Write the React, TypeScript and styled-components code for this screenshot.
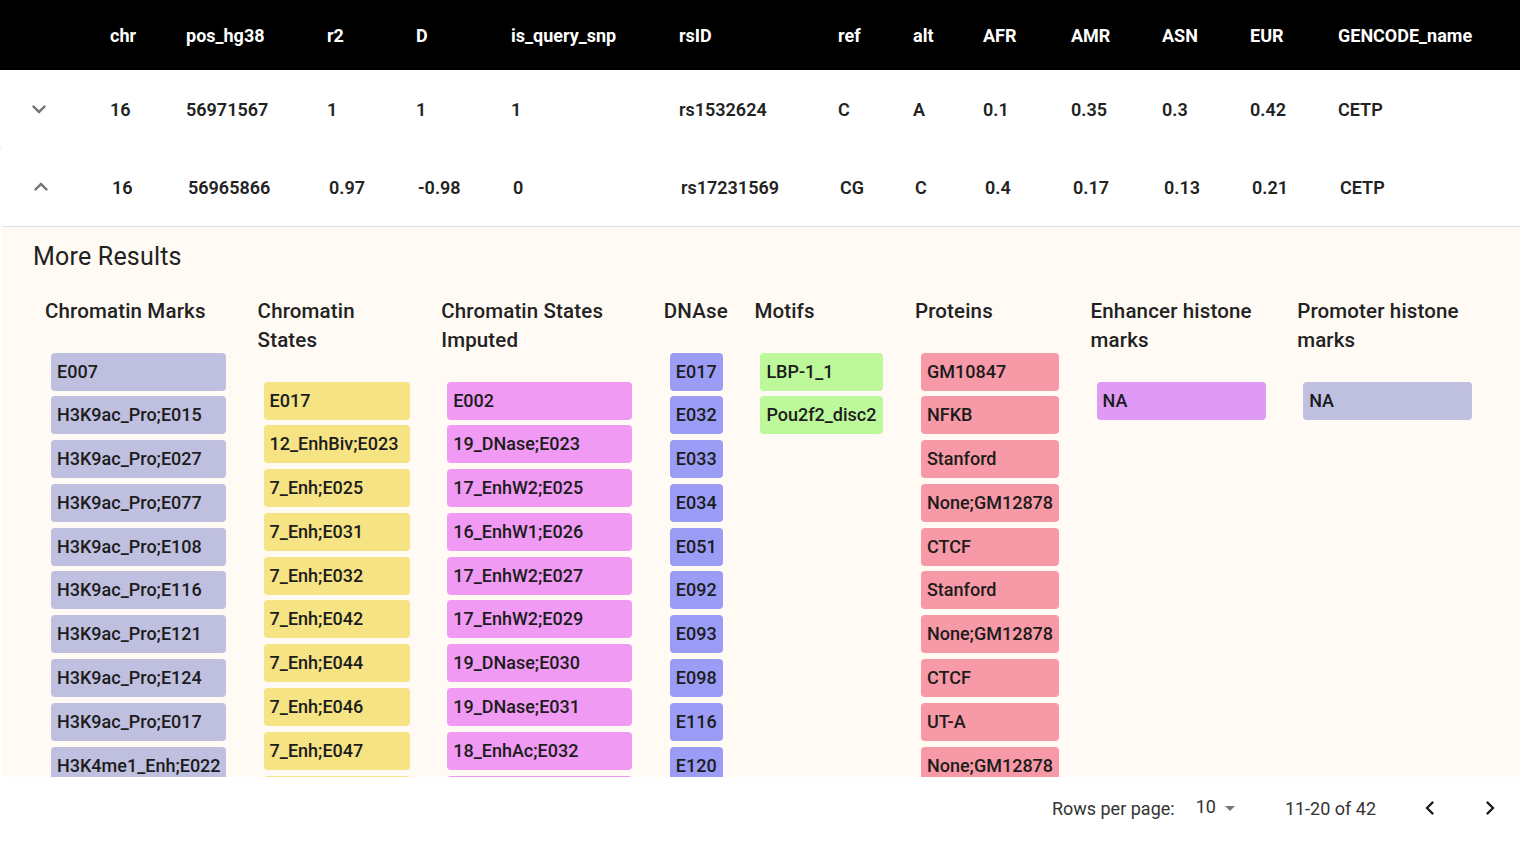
import React from 'react';
import styled, { createGlobalStyle } from 'styled-components';

const GlobalStyle = createGlobalStyle`
  html, body {
    margin: 0;
    padding: 0;
    background: #fff;
    font-family: Roboto, "Liberation Sans", Arial, sans-serif;
  }
`;

const gridCols = '110px 76px 141px 89px 95px 168px 159px 75px 70px 88px 91px 88px 88px 1fr';

const Page = styled.div`
  width: 1520px;
  height: 853px;
  display: flex;
  flex-direction: column;
  overflow: hidden;
`;

const Scroller = styled.div`
  height: 777px;
  overflow: hidden;
  flex-shrink: 0;
`;

const HeadRow = styled.div`
  display: grid;
  grid-template-columns: ${gridCols};
  align-items: center;
  height: 70px;
  background: #000;
  color: #fff;
  font-size: 18px;
  font-weight: 700;
`;

const Row = styled.div<{ $shadow?: boolean }>`
  display: grid;
  grid-template-columns: ${gridCols};
  align-items: center;
  height: 78px;
  background: #fff;
  color: #222;
  font-size: 18px;
  font-weight: 600;
  position: relative;
  z-index: 1;
  box-shadow: ${(p) => (p.$shadow ? '0 1px 3px rgba(0, 0, 0, 0.12)' : 'none')};
`;

const ExpandCell = styled.div`
  display: flex;
  align-items: center;
  padding-left: 25px;
`;

const Group = styled.div`
  margin-left: 2px;
`;

const Details = styled.div`
  background: #fffaf3;
  border-top: 1px solid #e0e0e0;
  padding: 14px 0 40px 31px;
  min-height: 700px;
`;

const Title = styled.div`
  font-size: 25px;
  line-height: 32px;
  font-weight: 400;
  letter-spacing: 0.2px;
  color: #222;
`;

const Columns = styled.div`
  display: flex;
  align-items: flex-start;
  gap: 25.6px;
  margin-top: 24px;
  padding-left: 12px;
`;

const Column = styled.div<{ $w: number }>`
  width: ${(p) => p.$w}px;
  display: flex;
  flex-direction: column;
`;

const ColTitle = styled.div`
  font-size: 20.5px;
  line-height: 29px;
  font-weight: 500;
  letter-spacing: 0.15px;
  color: #222;
  margin-bottom: 26.5px;
`;

const ChipList = styled.div`
  display: flex;
  flex-direction: column;
  gap: 5.8px;
  padding: 0 6px;
`;

const Chip = styled.div<{ $bg: string }>`
  height: 38px;
  line-height: 38px;
  padding: 0 6px;
  border-radius: 4px;
  background: ${(p) => p.$bg};
  color: #1c1c1c;
  font-size: 18px;
  font-weight: 500;
  white-space: nowrap;
`;

const Footer = styled.div`
  height: 76px;
  box-sizing: border-box;
  display: flex;
  align-items: center;
  justify-content: flex-end;
  padding: 0 10px 14px 0;
  color: #333;
  font-size: 18px;
`;

const SelectBox = styled.div`
  display: flex;
  align-items: center;
  margin-left: 21px;
  padding-bottom: 4px;
  svg {
    margin-left: 2px;
    margin-top: 4px;
  }
`;

const PageInfo = styled.div`
  margin-left: 43px;
`;

const PageButton = styled.div<{ $first?: boolean }>`
  width: 40px;
  height: 40px;
  display: flex;
  align-items: center;
  justify-content: center;
  margin-left: ${(p) => (p.$first ? '34px' : '20px')};
`;

const Icon = ({ d, size, color }: { d: string; size: number; color: string }) => (
  <svg width={size} height={size} viewBox="0 0 24 24" fill={color}>
    <path d={d} />
  </svg>
);

const ICON_DOWN = 'M7.41 8.59 12 13.17l4.59-4.58L18 10l-6 6-6-6 1.41-1.41z';
const ICON_UP = 'M7.41 15.41 12 10.83l4.59 4.58L18 14l-6-6-6 6z';
const ICON_LEFT = 'M15.41 16.59 10.83 12l4.58-4.59L14 6l-6 6 6 6 1.41-1.41z';
const ICON_RIGHT = 'M8.59 16.59 13.17 12 8.59 7.41 10 6l6 6-6 6-1.41-1.41z';
const ICON_DROP = 'M7 10l5 5 5-5z';

const headers = ['chr', 'pos_hg38', 'r2', 'D', 'is_query_snp', 'rsID', 'ref', 'alt', 'AFR', 'AMR', 'ASN', 'EUR', 'GENCODE_name'];

const rows = [
  ['16', '56971567', '1', '1', '1', 'rs1532624', 'C', 'A', '0.1', '0.35', '0.3', '0.42', 'CETP'],
  ['16', '56965866', '0.97', '-0.98', '0', 'rs17231569', 'CG', 'C', '0.4', '0.17', '0.13', '0.21', 'CETP'],
];

const details = [
  {
    title: 'Chromatin Marks', w: 187, bg: '#bfbfdf',
    items: ['E007', 'H3K9ac_Pro;E015', 'H3K9ac_Pro;E027', 'H3K9ac_Pro;E077', 'H3K9ac_Pro;E108', 'H3K9ac_Pro;E116', 'H3K9ac_Pro;E121', 'H3K9ac_Pro;E124', 'H3K9ac_Pro;E017', 'H3K4me1_Enh;E022', 'H3K4me1_Enh;E025'],
  },
  {
    title: 'Chromatin States', w: 158, bg: '#f5e384',
    items: ['E017', '12_EnhBiv;E023', '7_Enh;E025', '7_Enh;E031', '7_Enh;E032', '7_Enh;E042', '7_Enh;E044', '7_Enh;E046', '7_Enh;E047', '7_Enh;E050'],
  },
  {
    title: 'Chromatin States Imputed', w: 197, bg: '#f09af3',
    items: ['E002', '19_DNase;E023', '17_EnhW2;E025', '16_EnhW1;E026', '17_EnhW2;E027', '17_EnhW2;E029', '19_DNase;E030', '19_DNase;E031', '18_EnhAc;E032', '17_EnhW2;E033'],
  },
  {
    title: 'DNAse', w: 65, bg: '#9a9cf5',
    items: ['E017', 'E032', 'E033', 'E034', 'E051', 'E092', 'E093', 'E098', 'E116', 'E120'],
  },
  {
    title: 'Motifs', w: 135, bg: '#bdf89b',
    items: ['LBP-1_1', 'Pou2f2_disc2'],
  },
  {
    title: 'Proteins', w: 150, bg: '#f799a6',
    items: ['GM10847', 'NFKB', 'Stanford', 'None;GM12878', 'CTCF', 'Stanford', 'None;GM12878', 'CTCF', 'UT-A', 'None;GM12878'],
  },
  {
    title: 'Enhancer histone marks', w: 181, bg: '#df9af6',
    items: ['NA'],
  },
  {
    title: 'Promoter histone marks', w: 181, bg: '#bfbfdf',
    items: ['NA'],
  },
];

const DataRow = ({ values, open, shadow }: { values: string[]; open: boolean; shadow?: boolean }) => (
  <Row $shadow={shadow}>
    <ExpandCell>
      <Icon d={open ? ICON_UP : ICON_DOWN} size={28} color="#757575" />
    </ExpandCell>
    {values.map((v, i) => (
      <div key={i}>{v}</div>
    ))}
  </Row>
);

const App = () => {
  return (
    <Page>
      <GlobalStyle />
      <Scroller>
        <HeadRow>
          <div />
          {headers.map((h) => (
            <div key={h}>{h}</div>
          ))}
        </HeadRow>
        <DataRow values={rows[0]} open={false} shadow />
        <Group>
          <DataRow values={rows[1]} open />
          <Details>
            <Title>More Results</Title>
            <Columns>
              {details.map((col) => (
                <Column key={col.title} $w={col.w}>
                  <ColTitle>{col.title}</ColTitle>
                  <ChipList>
                    {col.items.map((item, i) => (
                      <Chip key={i} $bg={col.bg}>{item}</Chip>
                    ))}
                  </ChipList>
                </Column>
              ))}
            </Columns>
          </Details>
        </Group>
      </Scroller>
      <Footer>
        <div>Rows per page:</div>
        <SelectBox>
          <span>10</span>
          <Icon d={ICON_DROP} size={24} color="#757575" />
        </SelectBox>
        <PageInfo>11-20 of 42</PageInfo>
        <PageButton $first>
          <Icon d={ICON_LEFT} size={28} color="#222" />
        </PageButton>
        <PageButton>
          <Icon d={ICON_RIGHT} size={28} color="#222" />
        </PageButton>
      </Footer>
    </Page>
  );
};

export default App;
